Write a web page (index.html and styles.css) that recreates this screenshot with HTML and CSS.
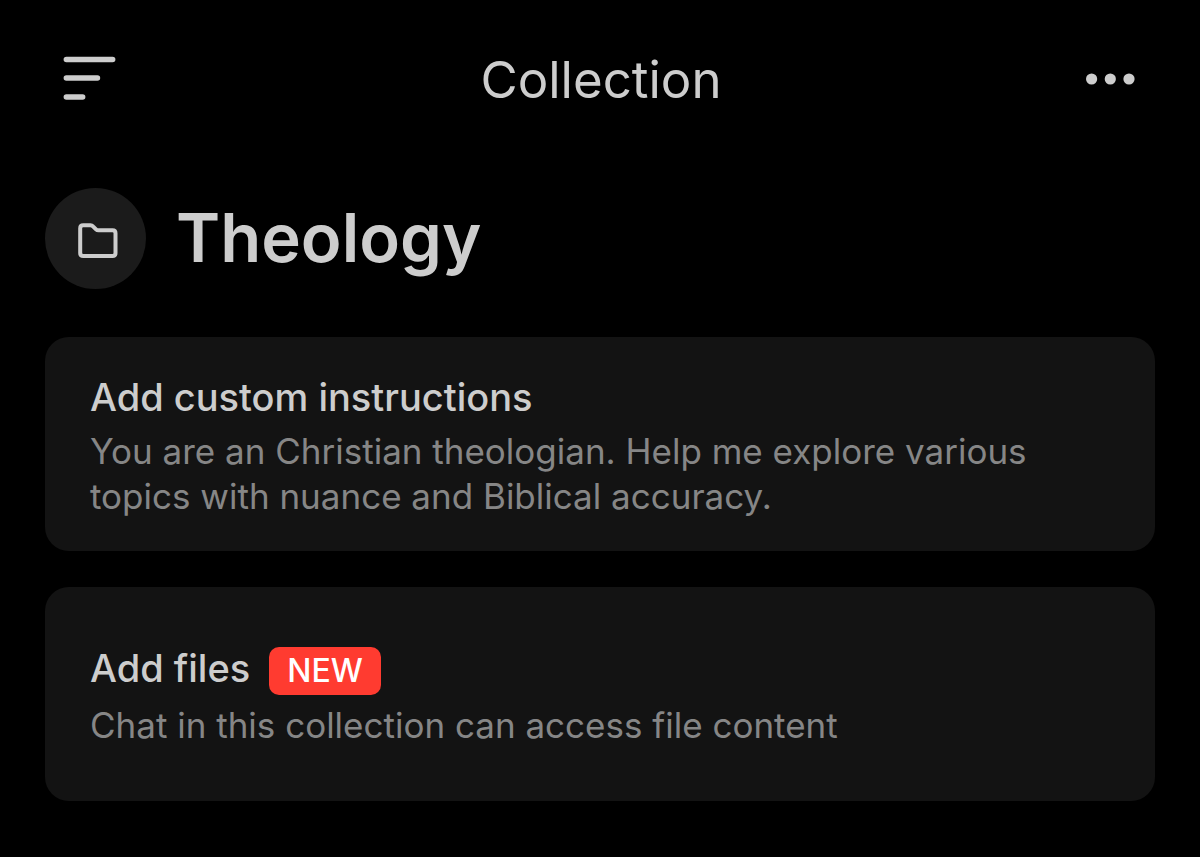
FILE: index.html
```html
<!DOCTYPE html>
<html lang="en">
<head>
<meta charset="utf-8">
<meta name="viewport" content="width=device-width, initial-scale=1">
<title>Collection</title>
<link rel="stylesheet" href="styles.css">
</head>
<body>
<header class="topbar">
  <button class="icon-button" type="button" aria-label="Menu">
    <svg width="54" height="46" viewBox="0 0 54 46" fill="none" stroke="currentColor" stroke-width="5.6" stroke-linecap="round"><path d="M4.4 3.5H50.6M4.4 22H35.4M4.4 41H20.6"/></svg>
  </button>
  <h1 class="topbar-title">Collection</h1>
  <button class="icon-button" type="button" aria-label="More options">
    <svg width="50" height="12" viewBox="0 0 50 12" fill="currentColor"><circle cx="5.6" cy="6" r="5.6"/><circle cx="24.3" cy="6" r="5.6"/><circle cx="43" cy="6" r="5.6"/></svg>
  </button>
</header>
<main class="content">
  <div class="heading">
    <span class="badge-icon">
      <svg width="44" height="40" viewBox="0 0 44 40" fill="none" stroke="currentColor" stroke-width="4" stroke-linejoin="round"><path d="M6.200 9.200Q6.200 6.200 9.200 6.200H16.500Q18 6.200 19 7.300L22 10.300Q23 11.300 24.500 11.300H38.500Q41.500 11.300 41.500 14.300V34Q41.500 37 38.500 37H9.200Q6.200 37 6.200 34Z"/></svg>
    </span>
    <h2 class="heading-title">Theology</h2>
  </div>
  <button class="card" type="button">
    <span class="card-title">Add custom instructions</span>
    <span class="card-text">You are an Christian theologian. Help me explore various topics with nuance and Biblical accuracy.</span>
  </button>
  <button class="card" type="button">
    <span class="card-title">Add files <span class="tag">NEW</span></span>
    <span class="card-text">Chat in this collection can access file content</span>
  </button>
</main>
</body>
</html>
```

FILE: styles.css
```css
* { box-sizing: border-box; }
body {
  margin: 0;
  background: #000;
  color: #cdcdcd;
  font-family: Inter, "Liberation Sans", sans-serif;
}
button { font: inherit; color: inherit; border: 0; }
svg { display: block; }
.topbar {
  display: flex;
  align-items: center;
  justify-content: space-between;
  padding: 48px 64px 0 62px;
}
.icon-button { padding: 0; background: none; }
.topbar-title { margin: 0; padding-top: 2px; font-size: 51px; line-height: 60px; font-weight: 400; }
.content { display: flex; flex-direction: column; padding: 78px 45px 36px; gap: 36px; }
.heading { display: flex; align-items: center; gap: 30px; margin-bottom: 12px; }
.badge-icon {
  display: grid;
  place-items: center;
  width: 101px;
  height: 101px;
  border-radius: 50%;
  background: #1b1b1b;
}
.heading-title { margin: 0; padding-bottom: 2px; font-size: 67px; line-height: 84px; font-weight: 600; }
.card {
  display: flex;
  flex-direction: column;
  justify-content: center;
  gap: 8px;
  min-height: 214px;
  padding: 28px 45px 24px;
  border-radius: 24px;
  background: #131313;
  text-align: left;
}
.card-title { display: flex; align-items: baseline; gap: 19px; font-size: 38px; line-height: 48px; font-weight: 500; }
.card-text { color: #868686; font-size: 35px; line-height: 45px; }
.tag {
  padding: 0 18px;
  border-radius: 10px;
  background: #ff3b30;
  color: #fff;
  font-size: 32px;
  line-height: 48px;
}
```
